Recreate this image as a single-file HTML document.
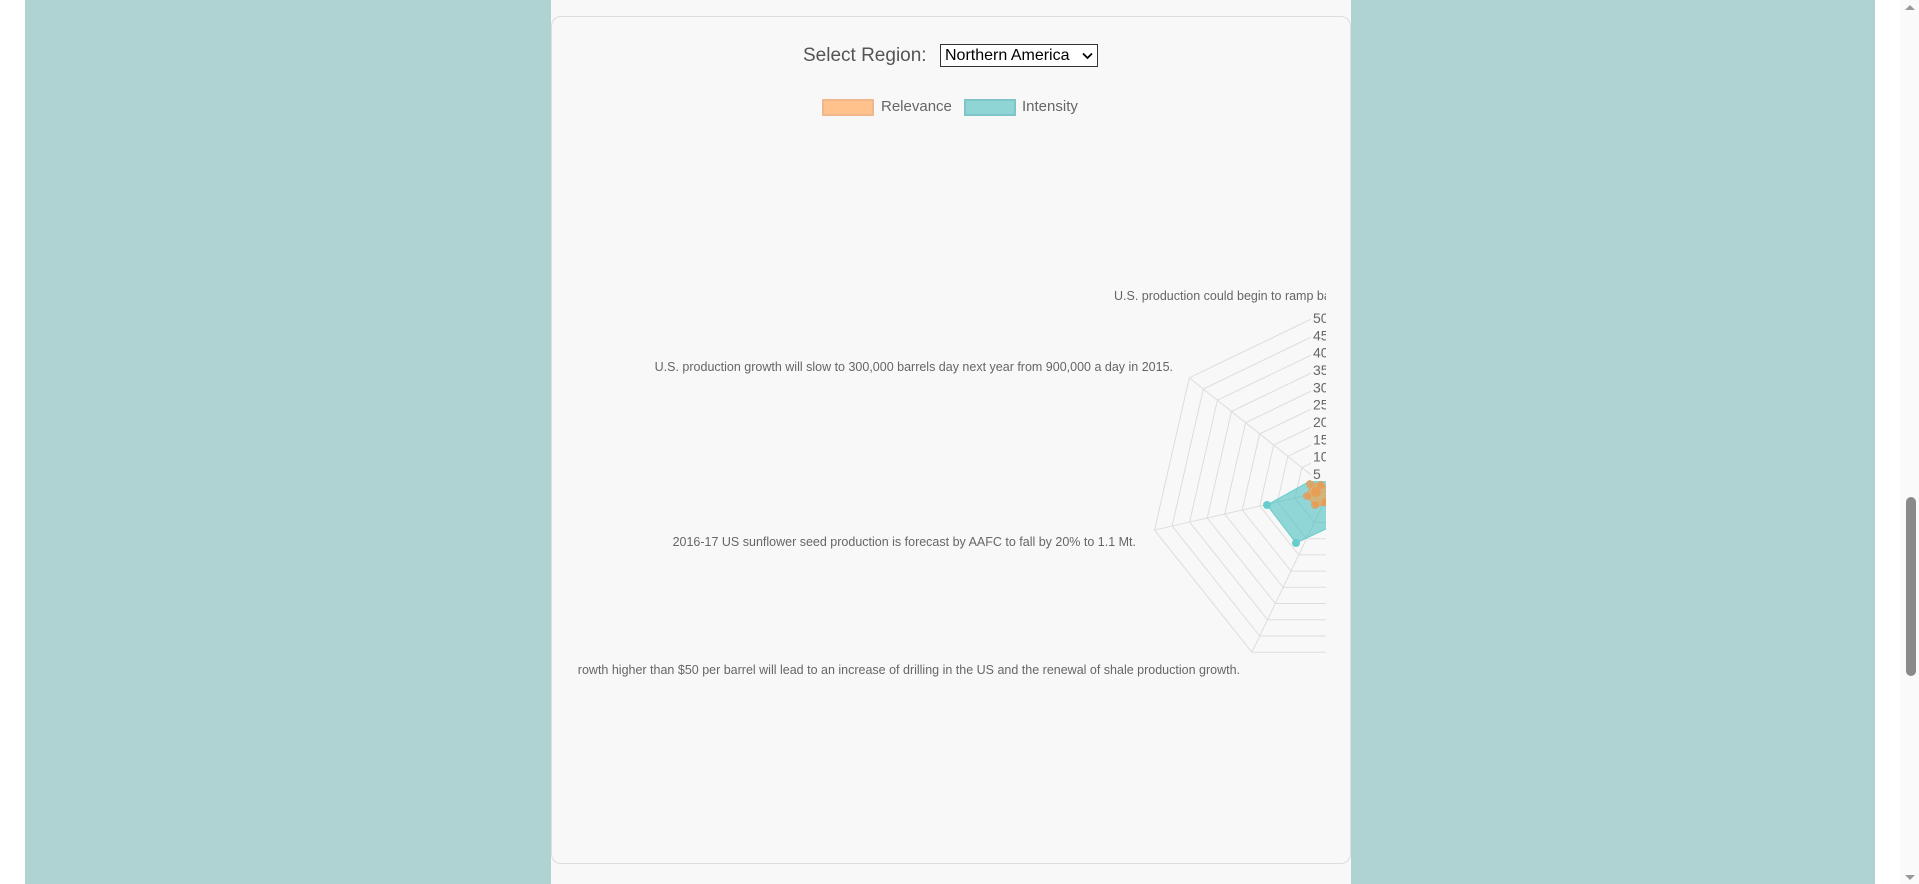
<!DOCTYPE html>
<html><head><meta charset="utf-8"><style>
html,body{margin:0;padding:0;width:1919px;height:884px;overflow:hidden;background:#fff;font-family:"Liberation Sans",sans-serif}
.teal{position:absolute;left:25px;top:0;width:1850px;height:884px;background:#afd2d3}
.panel{position:absolute;left:551px;top:0;width:800px;height:884px;background:#f8f8f8}
.card{position:absolute;left:551px;top:16px;width:798px;height:846px;border:1px solid #ddd;border-radius:10px;background:#f8f8f8}
.sb{position:absolute;left:1900px;top:0;width:19px;height:884px;background:#fafafa}
.thumb{position:absolute;left:1906px;top:497px;width:10px;height:179px;background:#8a8a8a;border-radius:5px}
.sel{position:absolute;left:803px;top:45px;font-size:19px;color:#555;white-space:nowrap}
.box{position:absolute;left:940px;top:44px;height:23px;width:158px;border:1px solid #333;background:#fff;font-size:16px;color:#000;line-height:21px;padding-left:4px;box-sizing:border-box;white-space:nowrap}
.lg{position:absolute;top:98px;font-size:15px;color:#666;white-space:nowrap}
.sw{position:absolute;top:99px;width:48px;height:13px;border:2px solid}
</style></head><body>
<div class="teal"></div>
<div class="panel"></div>
<div class="card"></div>
<div class="sb"></div>
<div class="thumb"></div>
<svg style="position:absolute;left:1904px;top:3px" width="12" height="8"><path d="M1 7 L6 2 L11 7Z" fill="#999"/></svg>
<svg style="position:absolute;left:1904px;top:874px" width="12" height="8"><path d="M1 1 L6 6 L11 1Z" fill="#999"/></svg>
<div class="sel">Select Region:</div>
<div class="box">Northern America <svg width="11" height="8" style="position:absolute;right:4px;top:7px"><path d="M1 1.5 L5.5 6 L10 1.5" stroke="#000" stroke-width="1.8" fill="none"/></svg></div>
<div class="sw" style="left:822px;background:#ffc28c;border-color:#f0b88a"></div>
<div class="lg" style="left:881px">Relevance</div>
<div class="sw" style="left:964px;background:#8fd5d6;border-color:#7fc4c6"></div>
<div class="lg" style="left:1022px">Intensity</div>
<svg style="position:absolute;left:0;top:0" width="1919" height="884">
<defs><clipPath id="c"><rect x="577" y="270" width="749" height="420"/></clipPath></defs>
<g clip-path="url(#c)" font-family="Liberation Sans, sans-serif" font-size="12.5" fill="#666">
<g id="grid" stroke="#ddd" fill="none" stroke-width="1"></g>
<polygon points="1330,470 1267,505 1296,543 1345,520 1345,470" fill="rgba(75,192,192,0.6)" stroke="#6cc" />
<g fill="#6cc"><circle cx="1267" cy="505" r="4"/><circle cx="1296" cy="543" r="4"/><circle cx="1321" cy="478" r="4"/></g>
<polygon points="1316,483 1322,485 1330,490 1325,505 1315,506 1307,496 1310,486" fill="rgba(255,159,64,0.6)" stroke="#e9a060"/>
<g fill="rgba(240,150,70,0.7)"><circle cx="1310" cy="484" r="4"/><circle cx="1321" cy="485" r="4"/><circle cx="1307" cy="496" r="4"/><circle cx="1315" cy="505" r="4"/><circle cx="1325" cy="502" r="4"/><circle cx="1316" cy="492" r="5"/></g>
<text x="1114" y="300">U.S. production could begin to ramp back</text>
<text x="1173" y="371" text-anchor="end">U.S. production growth will slow to 300,000 barrels day next year from 900,000 a day in 2015.</text>
<text x="1136" y="546" text-anchor="end">2016-17 US sunflower seed production is forecast by AAFC to fall by 20% to 1.1 Mt.</text>
<text x="1240" y="674" text-anchor="end">Oil price growth higher than $50 per barrel will lead to an increase of drilling in the US and the renewal of shale production growth.</text>
<g font-size="14" fill="#666" id="ticks"></g>
</g>
</svg>
<script>
var cx=1330,cy=490,R=180,n=7,g=document.getElementById('grid'),ns='http://www.w3.org/2000/svg';
for(var k=1;k<=10;k++){var r=R*k/10,p=[];for(var i=0;i<n;i++){var a=i*2*Math.PI/n;p.push((cx+r*Math.sin(a)).toFixed(1)+','+(cy-r*Math.cos(a)).toFixed(1));}
var e=document.createElementNS(ns,'polygon');e.setAttribute('points',p.join(' '));g.appendChild(e);}
for(var i=0;i<n;i++){var a=i*2*Math.PI/n,l=document.createElementNS(ns,'line');l.setAttribute('x1',cx);l.setAttribute('y1',cy);l.setAttribute('x2',cx+R*Math.sin(a));l.setAttribute('y2',cy-R*Math.cos(a));g.appendChild(l);}
var t=document.getElementById('ticks');
for(var k=1;k<=10;k++){var y=474-(k-1)*17.33;var rc=document.createElementNS(ns,'rect');rc.setAttribute('x',1311);rc.setAttribute('y',y-8);rc.setAttribute('width',20);rc.setAttribute('height',15);rc.setAttribute('fill','#f8f8f8');t.appendChild(rc);
var tx=document.createElementNS(ns,'text');tx.setAttribute('x',1313);tx.setAttribute('y',y+5);tx.textContent=(k*5);t.appendChild(tx);}
</script>
</body></html>
